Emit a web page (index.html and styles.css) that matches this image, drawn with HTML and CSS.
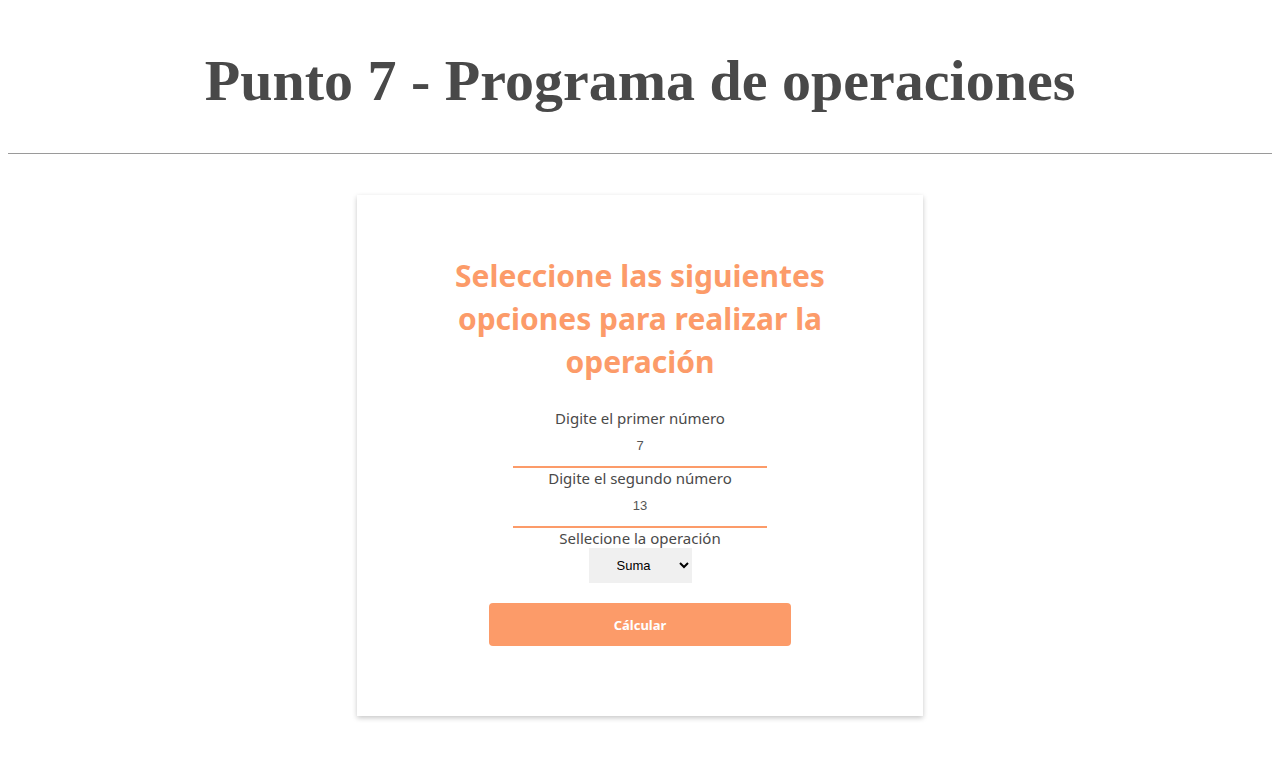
FILE: index.html
```html
<!DOCTYPE html>
<html lang="es">
<head>
<meta charset="utf-8">
<title>Punto 7</title>
<link rel="stylesheet" href="styles.css">
</head>
<body>
<h1 class="title">Punto 7 - Programa de operaciones</h1>
<hr class="rule">
<main class="card">
  <form class="form">
    <h2 class="form-title">Seleccione las siguientes opciones para realizar la operación</h2>
    <label class="label">Digite el primer número</label>
    <input class="field" type="text" value="7">
    <label class="label">Digite el segundo número</label>
    <input class="field" type="text" value="13">
    <label class="label">Sellecione la operación</label>
    <select class="select">
      <option>Suma</option>
      <option>Resta</option>
      <option>Multiplicación</option>
      <option>División</option>
    </select>
    <button class="btn" type="button">Cálcular</button>
  </form>
</main>
</body>
</html>
```
FILE: styles.css
```css
html, body {
  background: #ffffff;
}
body {
  margin: 8px;
  font-family: "Noto Sans", "Open Sans", sans-serif;
}
.title {
  font-family: "Liberation Serif", "Times New Roman", serif;
  font-weight: bold;
  font-size: 58px;
  line-height: 69px;
  color: #494949;
  text-align: center;
  margin: 38px 0 38px;
}
.rule {
  margin: 0;
  border: none;
  border-top: 1px solid #9a9a9a;
  height: 0;
}
.card {
  width: 566px;
  margin: 41px auto 32px;
  background: #fff;
  box-shadow: 0 2px 5px rgba(0, 0, 0, 0.22);
  padding: 59px 0 70px;
  box-sizing: border-box;
}
.form {
  display: flex;
  flex-direction: column;
  align-items: center;
}
.form-title {
  width: 400px;
  margin: 0 0 25px;
  color: #fc9b69;
  font-size: 30px;
  line-height: 43px;
  font-weight: bold;
  text-align: center;
}
.label {
  font-size: 15px;
  line-height: 21px;
  color: #494949;
}
.field {
  width: 254px;
  height: 39px;
  box-sizing: border-box;
  border: none;
  border-bottom: 2px solid #fc9b69;
  outline: none;
  text-align: center;
  font-family: "Liberation Sans", Arial, sans-serif;
  font-size: 13px;
  color: #555;
  padding: 0 0 4px;
  background: transparent;
}
.select {
  width: 103px;
  height: 35px;
  margin-top: -1px;
  border: none;
  background: #f0f0f0;
  font-family: "Liberation Sans", Arial, sans-serif;
  font-size: 13px;
  color: #000;
  padding: 0 8px 0 24px;
}
.btn {
  width: 302px;
  height: 43px;
  margin-top: 20px;
  border: none;
  border-radius: 4px;
  background: #fc9b69;
  color: #fff;
  font-family: "Noto Sans", "Open Sans", sans-serif;
  font-weight: bold;
  font-size: 13px;
}
```
